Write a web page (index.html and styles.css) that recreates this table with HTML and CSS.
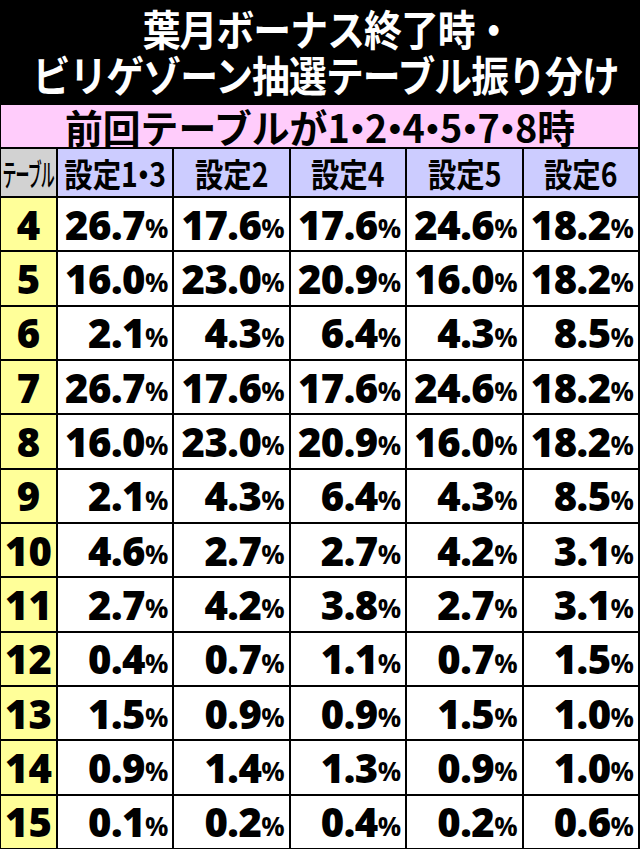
FILE: index.html
```html
<!DOCTYPE html>
<html lang="ja">
<head>
<meta charset="utf-8">
<link rel="stylesheet" href="styles.css">
</head>
<body>
<div class="page">
  <header class="title">
    <div class="tline"><span class="ttext">葉月ボーナス終了時<span class="tdot">・</span></span></div>
    <div class="tline"><span class="ttext">ビリゲゾーン抽選テーブル振り分け</span></div>
  </header>
  <div class="grid">
    <div class="cond"><span class="condtext">前回テーブルが1<span class="dot">・</span>2<span class="dot">・</span>4<span class="dot">・</span>5<span class="dot">・</span>7<span class="dot">・</span>8時</span></div>
    <div class="lab"><span class="labtext">テーブル</span></div>
    <div class="hd"><span class="hdtext">設定1<span class="dot">・</span>3</span></div>
    <div class="hd"><span class="hdtext">設定2</span></div>
    <div class="hd"><span class="hdtext">設定4</span></div>
    <div class="hd"><span class="hdtext">設定5</span></div>
    <div class="hd"><span class="hdtext">設定6</span></div>

    <div class="rn">4</div><div class="v">26.7<small>%</small></div><div class="v">17.6<small>%</small></div><div class="v">17.6<small>%</small></div><div class="v">24.6<small>%</small></div><div class="v">18.2<small>%</small></div>
    <div class="rn">5</div><div class="v">16.0<small>%</small></div><div class="v">23.0<small>%</small></div><div class="v">20.9<small>%</small></div><div class="v">16.0<small>%</small></div><div class="v">18.2<small>%</small></div>
    <div class="rn">6</div><div class="v">2.1<small>%</small></div><div class="v">4.3<small>%</small></div><div class="v">6.4<small>%</small></div><div class="v">4.3<small>%</small></div><div class="v">8.5<small>%</small></div>
    <div class="rn">7</div><div class="v">26.7<small>%</small></div><div class="v">17.6<small>%</small></div><div class="v">17.6<small>%</small></div><div class="v">24.6<small>%</small></div><div class="v">18.2<small>%</small></div>
    <div class="rn">8</div><div class="v">16.0<small>%</small></div><div class="v">23.0<small>%</small></div><div class="v">20.9<small>%</small></div><div class="v">16.0<small>%</small></div><div class="v">18.2<small>%</small></div>
    <div class="rn">9</div><div class="v">2.1<small>%</small></div><div class="v">4.3<small>%</small></div><div class="v">6.4<small>%</small></div><div class="v">4.3<small>%</small></div><div class="v">8.5<small>%</small></div>
    <div class="rn">10</div><div class="v">4.6<small>%</small></div><div class="v">2.7<small>%</small></div><div class="v">2.7<small>%</small></div><div class="v">4.2<small>%</small></div><div class="v">3.1<small>%</small></div>
    <div class="rn">11</div><div class="v">2.7<small>%</small></div><div class="v">4.2<small>%</small></div><div class="v">3.8<small>%</small></div><div class="v">2.7<small>%</small></div><div class="v">3.1<small>%</small></div>
    <div class="rn">12</div><div class="v">0.4<small>%</small></div><div class="v">0.7<small>%</small></div><div class="v">1.1<small>%</small></div><div class="v">0.7<small>%</small></div><div class="v">1.5<small>%</small></div>
    <div class="rn">13</div><div class="v">1.5<small>%</small></div><div class="v">0.9<small>%</small></div><div class="v">0.9<small>%</small></div><div class="v">1.5<small>%</small></div><div class="v">1.0<small>%</small></div>
    <div class="rn">14</div><div class="v">0.9<small>%</small></div><div class="v">1.4<small>%</small></div><div class="v">1.3<small>%</small></div><div class="v">0.9<small>%</small></div><div class="v">1.0<small>%</small></div>
    <div class="rn">15</div><div class="v">0.1<small>%</small></div><div class="v">0.2<small>%</small></div><div class="v">0.4<small>%</small></div><div class="v">0.2<small>%</small></div><div class="v">0.6<small>%</small></div>
  </div>
</div>
</body>
</html>
```

FILE: styles.css
```css
html, body {
  margin: 0;
  padding: 0;
  background: #000;
}
.page {
  width: 640px;
  height: 849px;
  overflow: hidden;
  background: #000;
  font-family: "Noto Sans CJK JP", "Noto Sans", sans-serif;
}
.title {
  height: 103px;
  box-sizing: border-box;
  padding-top: 5px;
  color: #fff;
  font-weight: 700;
  font-size: 42px;
  line-height: 46px;
  text-align: center;
}
.tline {
  white-space: nowrap;
}
.ttext {
  display: inline-block;
  transform: scaleX(0.9);
  letter-spacing: -1px;
}
.tdot {
  margin-right: -0.4em;
}
.grid {
  display: grid;
  grid-template-columns: 55px repeat(5, 1fr);
  grid-template-rows: 42px 47px;
  grid-auto-rows: 52.33px;
  gap: 2px;
  padding: 2px 2px 1px 1px;
  background: #000;
}
.cond {
  grid-column: 1 / -1;
  background: #ffccfb;
  display: flex;
  align-items: center;
  justify-content: center;
  font-weight: 700;
  font-size: 39px;
  line-height: 42px;
  color: #000;
  overflow: hidden;
}
.condtext {
  display: inline-block;
  transform: scaleX(0.97);
  white-space: nowrap;
}
.dot {
  margin: 0 -0.3em;
}
.lab {
  background: #d2d2d2;
  display: flex;
  align-items: center;
  justify-content: center;
  overflow: hidden;
}
.labtext {
  display: inline-block;
  font-weight: 500;
  font-size: 31px;
  transform: scaleX(0.45);
  white-space: nowrap;
  letter-spacing: -2px;
}
.hd {
  background: #ccccff;
  display: flex;
  align-items: center;
  justify-content: center;
  font-weight: 700;
  font-size: 33px;
  overflow: hidden;
}
.hdtext {
  display: inline-block;
  transform: scaleX(0.86);
  white-space: nowrap;
}
.rn {
  background: #ffff99;
  display: flex;
  align-items: center;
  justify-content: center;
  font-family: "Open Sans", "Noto Sans", sans-serif;
  font-weight: 800;
  font-size: 40px;
}
.v {
  background: #fff;
  display: flex;
  align-items: center;
  justify-content: flex-end;
  padding-right: 4px;
  font-family: "Open Sans", "Noto Sans", sans-serif;
  font-weight: 800;
  font-size: 40px;
  letter-spacing: -0.5px;
  white-space: nowrap;
}
.v small {
  font-size: 26px;
  font-weight: 700;
  margin-top: 8px;
  letter-spacing: 0;
}
```
